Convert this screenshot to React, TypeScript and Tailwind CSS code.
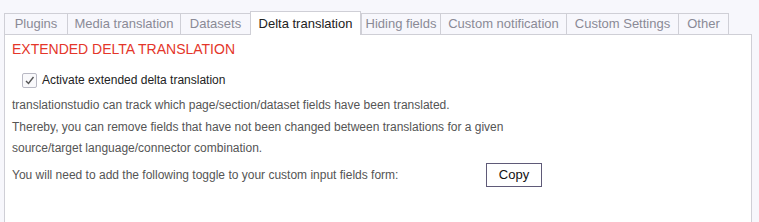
import React from 'react';

const TABS = [
  { label: 'Plugins', w: 'w-[63px]' },
  { label: 'Media translation', w: 'w-[113px]' },
  { label: 'Datasets', w: 'w-[70px]' },
  { label: 'Delta translation', w: 'w-[111px]' },
  { label: 'Hiding fields', w: 'w-[79px]' },
  { label: 'Custom notification', w: 'w-[126px]' },
  { label: 'Custom Settings', w: 'w-[112px]' },
  { label: 'Other', w: 'w-[51px]' },
];

const ACTIVE = 'Delta translation';

export default function App() {
  return (
    <div className="w-[759px] h-[222px] bg-[#f7f7fc] pt-[11px] pl-[4px] pr-[7px] flex flex-col font-['Liberation_Sans',Arial,sans-serif] overflow-hidden">
      <div className="flex items-end">
        {TABS.map((tab, i) => {
          const active = tab.label === ACTIVE;
          const last = i === TABS.length - 1;
          return active ? (
            <div
              key={tab.label}
              className={`${tab.w} shrink-0 whitespace-nowrap relative z-10 -mb-px h-[24px] flex items-center justify-center bg-white border-t border-l border-r border-[#cfcfd6] text-[13px] text-[#222]`}
            >
              {tab.label}
            </div>
          ) : (
            <div
              key={tab.label}
              className={`${tab.w} shrink-0 whitespace-nowrap h-[21px] flex items-center justify-center border-t border-l border-[#cfcfd6] text-[13px] text-[#8a8a96] ${last ? 'border-r' : ''}`}
            >
              {tab.label}
            </div>
          );
        })}
      </div>
      <div className="flex-1 bg-white border-t border-l border-r border-[#cfcfd6] pl-[7px] pt-[6px]">
        <h2 className="text-[14px] leading-[16px] text-[#e4362a]">EXTENDED DELTA TRANSLATION</h2>
        <label className="mt-[14px] ml-[10px] flex items-center gap-[5px] text-[12px] text-[#222]">
          <span className="w-[15px] h-[15px] border border-[#b9b9c4] rounded-[2px] bg-[#f9f9fb] flex items-center justify-center">
            <svg width="11" height="11" viewBox="0 0 11 11">
              <path d="M2 6 L4.5 8.5 L9.5 2" fill="none" stroke="#555" strokeWidth="1.4" />
            </svg>
          </span>
          Activate extended delta translation
        </label>
        <div className="mt-[6px] text-[12px] leading-[21.5px] text-[#555]">
          <p>translationstudio can track which page/section/dataset fields have been translated.</p>
          <p>Thereby, you can remove fields that have not been changed between translations for a given</p>
          <p>source/target language/connector combination.</p>
        </div>
        <div className="mt-[3px] flex items-center text-[12px] text-[#555]">
          <span className="w-[474px]">You will need to add the following toggle to your custom input fields form:</span>
          <button className="w-[56px] h-[24px] border border-[#5f5a78] bg-white text-[13px] text-[#111]">Copy</button>
        </div>
      </div>
    </div>
  );
}
